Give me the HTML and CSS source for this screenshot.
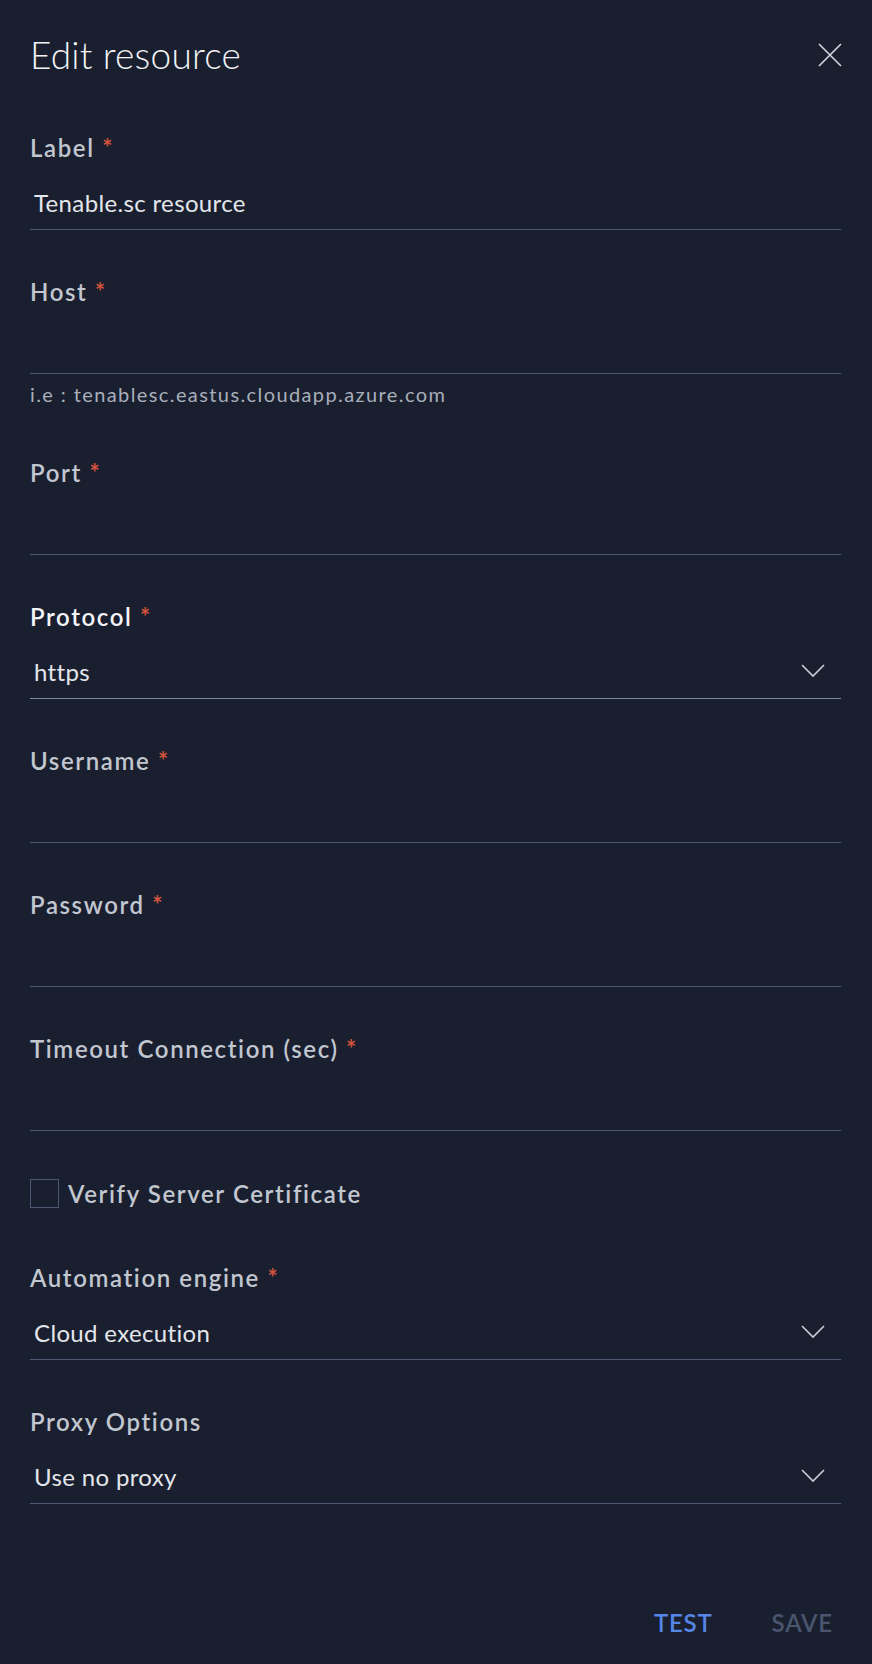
FILE: index.html
```html
<!DOCTYPE html>
<html lang="en">
<head>
<meta charset="utf-8">
<title>Edit resource</title>
<link rel="stylesheet" href="styles.css">
</head>
<body>
<div class="panel">
  <header class="panel-header">
    <h1 class="panel-title">Edit resource</h1>
    <button class="close-btn" aria-label="Close">
      <svg width="24" height="24" viewBox="0 0 24 24"><path d="M1 1 L23 23 M23 1 L1 23" stroke="#d3d6dc" stroke-width="1.6" fill="none"/></svg>
    </button>
  </header>

  <form class="form">
    <div class="field">
      <label class="field-label">Label <span class="req">*</span></label>
      <div class="control"><span class="value">Tenable.sc resource</span></div>
    </div>

    <div class="field has-hint">
      <label class="field-label">Host <span class="req">*</span></label>
      <div class="control"></div>
      <div class="hint">i.e : tenablesc.eastus.cloudapp.azure.com</div>
    </div>

    <div class="field">
      <label class="field-label">Port <span class="req">*</span></label>
      <div class="control"></div>
    </div>

    <div class="field is-active">
      <label class="field-label">Protocol <span class="req">*</span></label>
      <div class="control select"><span class="value">https</span>
        <svg class="chevron" width="24" height="14" viewBox="0 0 24 14"><path d="M1 1 L12 12 L23 1" stroke="#c9ced6" stroke-width="1.6" fill="none"/></svg>
      </div>
    </div>

    <div class="field">
      <label class="field-label">Username <span class="req">*</span></label>
      <div class="control"></div>
    </div>

    <div class="field">
      <label class="field-label">Password <span class="req">*</span></label>
      <div class="control"></div>
    </div>

    <div class="field">
      <label class="field-label">Timeout Connection (sec) <span class="req">*</span></label>
      <div class="control"></div>
    </div>

    <div class="check-row">
      <span class="checkbox"></span>
      <span class="check-label">Verify Server Certificate</span>
    </div>

    <div class="field">
      <label class="field-label">Automation engine <span class="req">*</span></label>
      <div class="control select"><span class="value">Cloud execution</span>
        <svg class="chevron" width="24" height="14" viewBox="0 0 24 14"><path d="M1 1 L12 12 L23 1" stroke="#c9ced6" stroke-width="1.6" fill="none"/></svg>
      </div>
    </div>

    <div class="field">
      <label class="field-label">Proxy Options</label>
      <div class="control select"><span class="value">Use no proxy</span>
        <svg class="chevron" width="24" height="14" viewBox="0 0 24 14"><path d="M1 1 L12 12 L23 1" stroke="#c9ced6" stroke-width="1.6" fill="none"/></svg>
      </div>
    </div>
  </form>

  <footer class="actions">
    <button class="action test">TEST</button>
    <button class="action save">SAVE</button>
  </footer>
</div>
</body>
</html>
```
FILE: styles.css
```css
html, body {
  margin: 0;
  padding: 0;
  background: #1a1f30;
}

body {
  font-family: "Lato", "Open Sans", sans-serif;
  color: #c4c9d1;
}

.panel {
  width: 872px;
  height: 1664px;
  box-sizing: border-box;
  padding: 0 31px 0 30px;
  display: flex;
  flex-direction: column;
}

.panel-header {
  display: flex;
  justify-content: space-between;
  align-items: center;
  height: 110px;
}

.panel-title {
  margin: 0;
  font-size: 37px;
  font-weight: 300;
  color: #f2f3f5;
  letter-spacing: 0.2px;
  line-height: 44px;
}

.close-btn {
  background: none;
  border: 0;
  padding: 0;
  width: 24px;
  height: 24px;
  margin-right: -1px;
  cursor: pointer;
}

.close-btn svg { display: block; }

.form {
  display: flex;
  flex-direction: column;
  margin-top: 24px;
}

.field {
  display: flex;
  flex-direction: column;
  margin-bottom: 48px;
}

.field-label,
.check-label {
  font-size: 24px;
  font-weight: 600;
  line-height: 28px;
  height: 28px;
  letter-spacing: 1.6px;
  color: #c1c6cf;
}

.req {
  color: #d4533c;
  font-weight: 700;
  letter-spacing: 0;
}

.control {
  border-bottom: 1px solid #4c5872;
  display: flex;
  align-items: flex-end;
  padding: 0 0 12px 4px;
  height: 55px;
}

.value {
  font-size: 24px;
  line-height: 28px;
  font-weight: 400;
  letter-spacing: 0.35px;
  color: #e3e6eb;
}

.select {
  justify-content: space-between;
}

.chevron {
  margin: 0 16px 8px 0;
  display: block;
}

.is-active .field-label { color: #f4f5f7; }
.is-active .control { border-bottom-color: #7c879d; }

.has-hint { margin-bottom: 51px; }

.hint {
  margin-top: 6px;
  font-size: 20px;
  line-height: 28px;
  font-weight: 400;
  letter-spacing: 1.4px;
  color: #a9afba;
}

.check-row {
  display: flex;
  align-items: center;
  gap: 9px;
  margin-bottom: 56px;
}

.checkbox {
  width: 27px;
  height: 27px;
  border: 1px solid #4c5872;
  display: block;
}

.actions {
  margin-top: auto;
  display: flex;
  justify-content: flex-end;
  gap: 59px;
  padding: 0 8px 27px 0;
}

.action {
  background: none;
  border: 0;
  padding: 0;
  font-family: inherit;
  font-size: 24px;
  font-weight: 600;
  line-height: 28px;
  letter-spacing: 0.8px;
  cursor: pointer;
}

.test { color: #5586e6; }
.save { color: #4a566f; }
```
